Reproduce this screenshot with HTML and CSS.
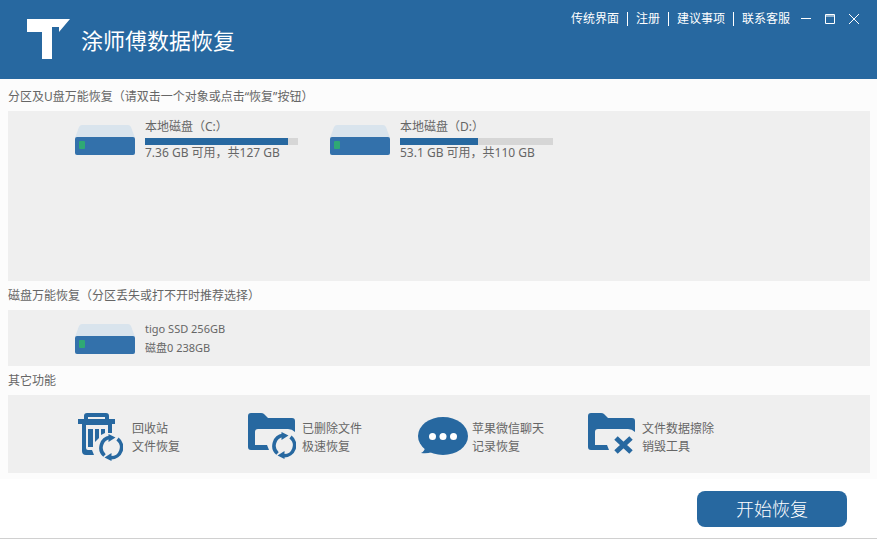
FILE: index.html
```html
<!DOCTYPE html>
<html lang="zh-CN">

<head>
    <meta charset="UTF-8">
    <meta name="viewport" content="width=device-width, initial-scale=1.0">
    <title>涂师傅数据恢复</title>
    <link rel="stylesheet" href="styles.css">
</head>

<body>
    <!-- shared shapes -->
    <svg class="defs" width="0" height="0" aria-hidden="true">
        <symbol id="disk" viewBox="0 0 60 30">
            <path d="M4 2Q5 0 7 0H53Q55 0 56 2L60 13H0Z" fill="#d9e4ed" />
            <rect y="12" width="60" height="18" rx="2" fill="#3371ab" />
            <rect x="4" y="16" width="6" height="8" rx="1" fill="#2fa874" />
        </symbol>
        <symbol id="folder" viewBox="0 0 50 48">
            <path d="M3 1H13Q15 1 16 2L20 6H44Q47 6 47 9V20Q44 17 40 17H10Q7 17 7 20V33H19L21 38H3Q0 38 0 35V4Q0 1 3 1Z" />
        </symbol>
        <symbol id="refresh" viewBox="0 0 26 28">
            <path d="M7.500 22.500A10.500 10.500 0 0 1 13 4.300M20.500 6A10.500 10.500 0 0 1 14 24.800" fill="none" stroke="currentColor" stroke-width="3.600" />
            <path d="M11.500 1L18.500 4.500L11.500 9ZM14.500 20V28L7.500 24.500Z" />
        </symbol>
    </svg>

    <header class="header">
        <svg class="logo" viewBox="0 0 43 40" width="43" height="40" aria-hidden="true">
            <path d="M0 0H43L32 13V8H25V40H15V13H0Z" />
        </svg>
        <h1 class="title">涂师傅数据恢复</h1>
        <nav class="nav">
            <a href="#">传统界面</a>
            <a href="#">注册</a>
            <a href="#">建议事项</a>
            <a href="#">联系客服</a>
        </nav>
        <div class="window-buttons">
            <button class="window-button" type="button" aria-label="最小化">
                <svg viewBox="0 0 10 10" width="10" height="10"><path d="M0 4.500H10" /></svg>
            </button>
            <button class="window-button" type="button" aria-label="最大化">
                <svg viewBox="0 0 10 10" width="10" height="10"><path d="M.5 .5H9.500V9.500H.5Z" /><path d="M1 2H9" stroke-width="2" opacity=".5" /></svg>
            </button>
            <button class="window-button" type="button" aria-label="关闭">
                <svg viewBox="0 0 10 10" width="10" height="10"><path d="M0 0L10 10M10 0L0 10" /></svg>
            </button>
        </div>
    </header>

    <main class="main">
        <h2 class="section-title">分区及U盘万能恢复（请双击一个对象或点击“恢复”按钮）</h2>
        <section class="panel partitions">
            <button class="disk" type="button">
                <svg class="disk-icon" aria-hidden="true"><use href="#disk" /></svg>
                <span class="disk-info">
                    <span class="disk-name">本地磁盘（C:）</span>
                    <span class="bar"><span class="bar-used" style="width: 93.500%"></span></span>
                    <span class="disk-size">7.36 GB 可用，共127 GB</span>
                </span>
            </button>
            <button class="disk" type="button">
                <svg class="disk-icon" aria-hidden="true"><use href="#disk" /></svg>
                <span class="disk-info">
                    <span class="disk-name">本地磁盘（D:）</span>
                    <span class="bar"><span class="bar-used" style="width: 51%"></span></span>
                    <span class="disk-size">53.1 GB 可用，共110 GB</span>
                </span>
            </button>
        </section>

        <h2 class="section-title">磁盘万能恢复（分区丢失或打不开时推荐选择）</h2>
        <section class="panel drives">
            <button class="disk" type="button">
                <svg class="disk-icon" aria-hidden="true"><use href="#disk" /></svg>
                <span class="disk-info drive-info">
                    <span>tigo SSD 256GB</span>
                    <span>磁盘0 238GB</span>
                </span>
            </button>
        </section>

        <h2 class="section-title">其它功能</h2>
        <section class="panel tools">
            <button class="tool" type="button">
                <svg class="tool-icon" viewBox="0 0 50 48" aria-hidden="true">
                    <path d="M6 7V4Q6 1 9 1H28Q31 1 31 4V7H37V12H34V21H30V13H8V36Q8 38 10 38H14L16 43H8Q4 43 4 39V12H0V7ZM10 5V7H27V5Z" fill-rule="evenodd" />
                    <path d="M10 17H15V35H10ZM17 17H21V26L17 30ZM23 17H27V21L23 23Z" />
                    <circle cx="32" cy="36" r="14" fill="#efefef" />
                    <use href="#refresh" x="19" y="21" width="26" height="28" />
                </svg>
                <span class="tool-name">回收站<br>文件恢复</span>
            </button>
            <button class="tool" type="button">
                <svg class="tool-icon" viewBox="0 0 50 48" aria-hidden="true">
                    <use href="#folder" width="50" height="48" />
                    <circle cx="35" cy="34" r="14" fill="#efefef" />
                    <use href="#refresh" x="22" y="19" width="26" height="28" />
                </svg>
                <span class="tool-name">已删除文件<br>极速恢复</span>
            </button>
            <button class="tool" type="button">
                <svg class="tool-icon" viewBox="0 0 50 48" aria-hidden="true">
                    <ellipse cx="25" cy="24" rx="25" ry="19" />
                    <path d="M7 35Q7 39 3 41Q9 42 14 40Z" />
                    <g fill="#fff">
                        <circle cx="14.500" cy="24.500" r="3.500" />
                        <circle cx="25" cy="24.500" r="3.500" />
                        <circle cx="35.500" cy="24.500" r="3.500" />
                    </g>
                </svg>
                <span class="tool-name">苹果微信聊天<br>记录恢复</span>
            </button>
            <button class="tool" type="button">
                <svg class="tool-icon" viewBox="0 0 50 48" aria-hidden="true">
                    <use href="#folder" width="50" height="48" />
                    <path d="M28 26L43 40M43 26L28 40" stroke="#efefef" stroke-width="9" />
                    <path d="M28 26L43 40M43 26L28 40" stroke="currentColor" stroke-width="5" />
                </svg>
                <span class="tool-name">文件数据擦除<br>销毁工具</span>
            </button>
        </section>
    </main>

    <footer class="footer">
        <button class="start" type="button">开始恢复</button>
    </footer>
</body>

</html>
```
FILE: styles.css
```css
* {
    box-sizing: border-box;
}

body {
    margin: 0;
    min-height: 100vh;
    display: flex;
    flex-direction: column;
    font-family: "Noto Sans", "Noto Sans CJK SC", sans-serif;
    font-size: 12px;
    line-height: 18px;
    color: #666;
    background: #fcfcfc;
}

button {
    margin: 0;
    padding: 0;
    border: 0;
    background: none;
    font: inherit;
    color: inherit;
    text-align: left;
    cursor: pointer;
}

.defs {
    position: absolute;
}

/* header */
.header {
    display: flex;
    align-items: flex-start;
    height: 79px;
    padding: 0 11px 0 27px;
    color: #fff;
    background: #2768a0;
}

.logo {
    margin-top: 19px;
    fill: #fff;
}

.title {
    flex: 1;
    margin: 24px 0 0 11px;
    font-size: 22px;
    line-height: 32px;
    font-weight: 400;
}

.nav {
    display: flex;
    margin-top: 10px;
}

.nav a {
    display: flex;
    align-items: center;
    color: inherit;
    text-decoration: none;
}

.nav a + a::before {
    content: "";
    width: 1px;
    height: 14px;
    margin: 0 8px;
    background: #fff;
}

.window-buttons {
    display: flex;
    margin: 10px 0 0 4px;
}

.window-button {
    display: flex;
    align-items: center;
    justify-content: center;
    width: 24px;
    height: 18px;
}

.window-button svg {
    fill: none;
    stroke: #fff;
}

/* content */
.main {
    flex: 1;
    display: flex;
    flex-direction: column;
    padding: 0 7px 6px 8px;
}

.section-title {
    margin: 0;
    padding: 6px 0 5px;
    font-size: 12px;
    font-weight: 400;
}

.section-title:first-child {
    padding: 9px 0 5px;
}

.panel {
    display: flex;
    background: #efefef;
}

.partitions {
    flex: 1;
    flex-wrap: wrap;
    align-items: flex-start;
    align-content: flex-start;
    padding: 6px 40px;
}

.drives {
    padding: 9px 40px;
}

.disk {
    display: flex;
    align-items: center;
    width: 255px;
    padding-left: 27px;
}

.disk-icon {
    flex: none;
    width: 60px;
    height: 30px;
    margin-top: 2px;
}

.disk-info {
    flex: 1;
    display: flex;
    flex-direction: column;
    margin: 0 5px 0 10px;
}

.disk-name {
    height: 21px;
    line-height: 20px;
}

.disk-size {
    line-height: 16px;
}

.drive-info {
    font-size: 11px;
    line-height: 19px;
}

.bar {
    display: block;
    height: 7px;
    background: #d6d6d6;
}

.bar-used {
    display: block;
    height: 100%;
    background: #2768a0;
}

.tools {
    flex-wrap: wrap;
    padding: 17px 70px 13px;
}

.tool {
    display: flex;
    align-items: center;
    gap: 4px;
    width: 170px;
}

.tool-icon {
    flex: none;
    width: 50px;
    height: 48px;
    overflow: visible;
    color: #2768a0;
    fill: currentColor;
}

.tool-name {
    padding-top: 4px;
}

/* footer */
.footer {
    display: flex;
    justify-content: flex-end;
    padding: 12px 30px 11px;
    background: #fff;
    border-bottom: 1px solid #d0d0d0;
}

.start {
    width: 150px;
    height: 36px;
    border-radius: 8px;
    font-size: 18px;
    font-weight: 300;
    text-align: center;
    color: #fff;
    background: #2768a0;
}
```
